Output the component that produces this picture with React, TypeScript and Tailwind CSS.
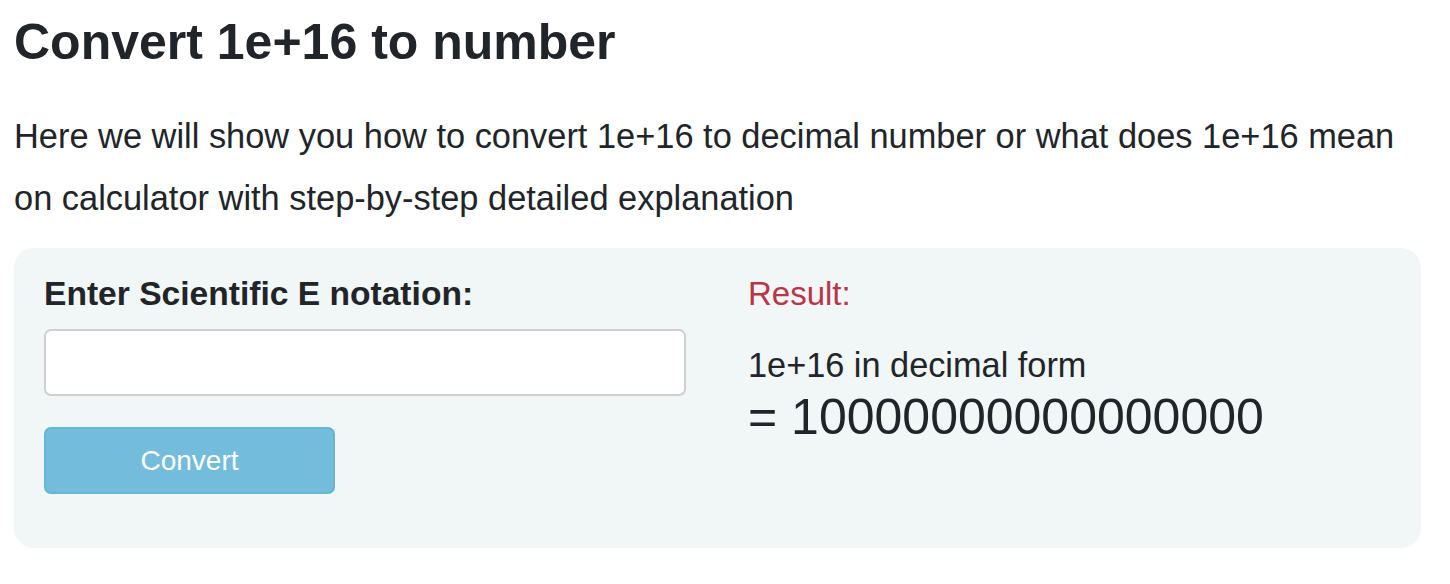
export default function App() {
  return (
    <div className="bg-white pl-[14px] pr-[29px] pt-[12px] text-[#212529] font-['Liberation_Sans',Arial,sans-serif]">
      <h1 className="text-[50px] leading-[60px] font-bold">Convert 1e+16 to number</h1>

      <p className="mt-[33px] text-[34.4px] leading-[62px]">
        Here we will show you how to convert 1e+16 to decimal number or what does 1e+16 mean on calculator with
        step-by-step detailed explanation
      </p>

      <div className="mt-[19px] grid h-[300px] grid-cols-2 gap-[62px] rounded-[20px] bg-[#f1f6f6] pt-[26px] pl-[30px] pr-[31px]">
        <div className="flex flex-col">
          <label className="text-[33.6px] leading-[40px] font-bold">Enter Scientific E notation:</label>
          <input
            type="text"
            className="mt-[15px] h-[67px] w-full rounded-[7px] border-2 border-[#cfcfcf] bg-white px-3 text-[30px] outline-none"
          />
          <button className="mt-[31px] h-[67px] w-[291px] rounded-[7px] border-2 border-[#67b4d5] bg-[#73bcdb] text-[28px] text-white">
            Convert
          </button>
        </div>

        <div className="flex flex-col">
          <div className="text-[33px] leading-[40px] text-[#b8354a]">Result:</div>
          <div className="mt-[31px] text-[34.3px] leading-[40px]">1e+16 in decimal form</div>
          <div className="mt-[4px] text-[50px] leading-[56px]">= 10000000000000000</div>
        </div>
      </div>
    </div>
  );
}
